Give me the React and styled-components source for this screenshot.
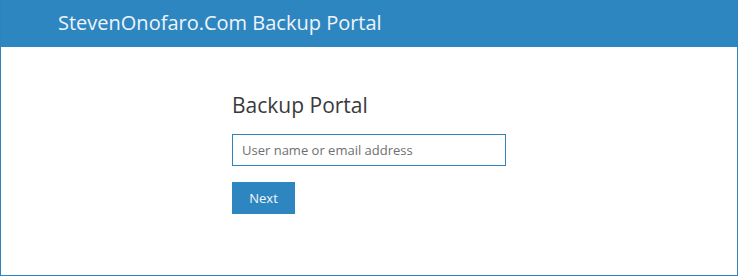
import React from "react";
import styled, { createGlobalStyle } from "styled-components";

const Global = createGlobalStyle`
  html, body { margin: 0; padding: 0; background: #fff; }
  body { font-family: "Open Sans", "Noto Sans", sans-serif; }
  * { box-sizing: border-box; }
`;

const Frame = styled.div`
  width: 738px;
  height: 276px;
  border: 1px solid #2e82bd;
  border-top: none;
  display: flex;
  flex-direction: column;
  overflow: hidden;
`;

const Header = styled.header`
  height: 47px;
  margin: 0 -1px;
  background: #2e86c1;
  display: flex;
  align-items: center;
  padding-left: 58px;
  padding-bottom: 2px;
`;

const Brand = styled.h1`
  margin: 0;
  font-size: 20px;
  font-weight: 400;
  color: #eef4fa;
  letter-spacing: 0;
`;

const Main = styled.main`
  flex: 1;
  padding: 45px 0 0 231px;
`;

const Form = styled.form`
  width: 274px;
  display: flex;
  flex-direction: column;
  align-items: flex-start;
`;

const Title = styled.h2`
  margin: 0 0 15px;
  font-size: 21px;
  line-height: 27px;
  font-weight: 400;
  color: #3a3a3a;
`;

const Input = styled.input`
  width: 274px;
  height: 32px;
  border: 1px solid #2e82bd;
  padding: 0 9px;
  font-family: inherit;
  font-size: 13px;
  color: #333;
  outline: none;
  &::placeholder { color: #6f6f6f; }
`;

const Button = styled.button`
  margin-top: 16px;
  width: 63px;
  height: 32px;
  border: none;
  background: #2e86c1;
  color: #f3f8fc;
  font-family: inherit;
  font-size: 13px;
  padding: 0;
  cursor: pointer;
`;

export default function App() {
  return (
    <>
      <Global />
      <Frame>
        <Header>
          <Brand>StevenOnofaro.Com Backup Portal</Brand>
        </Header>
        <Main>
          <Form onSubmit={(e) => e.preventDefault()}>
            <Title>Backup Portal</Title>
            <Input type="text" placeholder="User name or email address" />
            <Button type="submit">Next</Button>
          </Form>
        </Main>
      </Frame>
    </>
  );
}
